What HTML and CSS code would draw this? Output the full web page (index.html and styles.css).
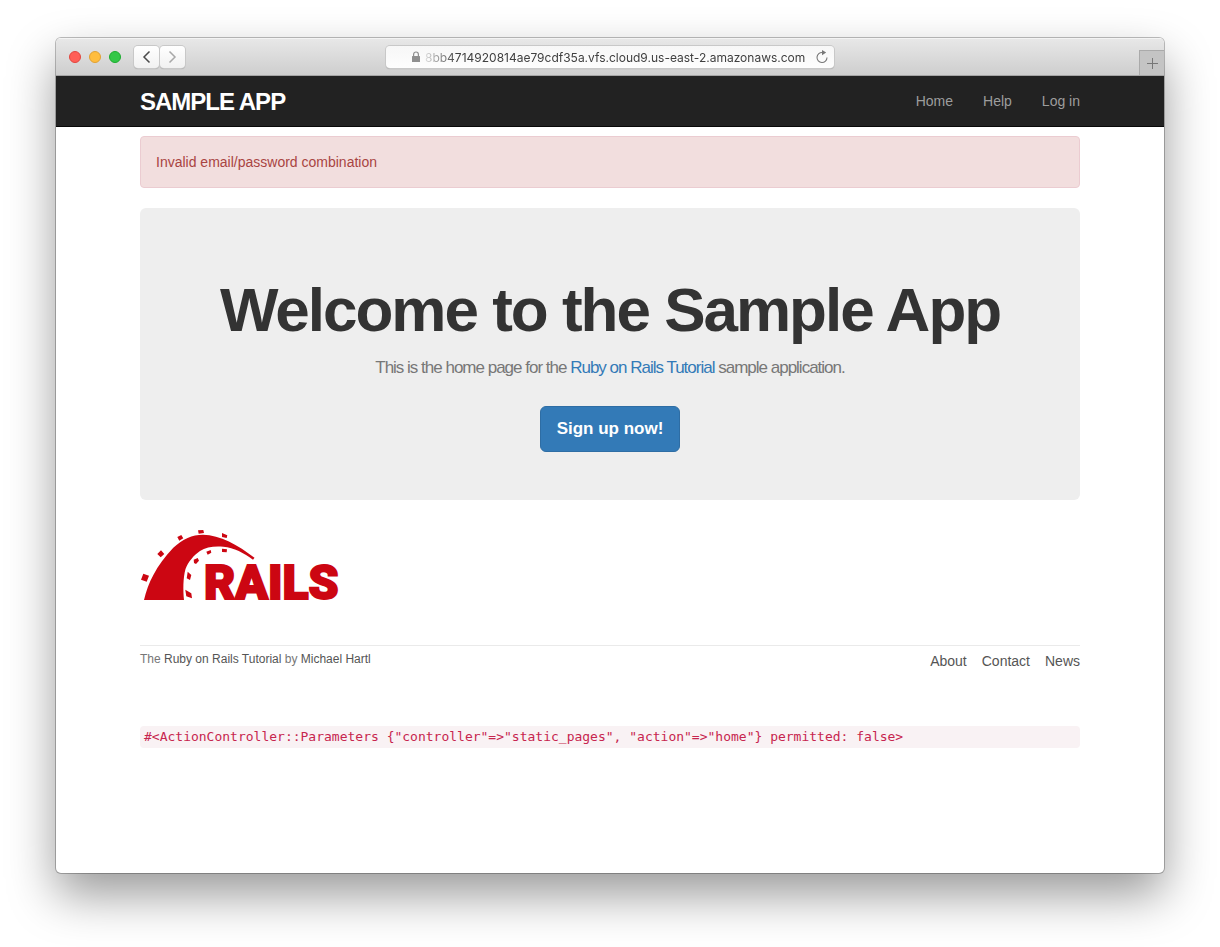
FILE: index.html
```html
<!DOCTYPE html>
<html lang="en">
<head>
<meta charset="utf-8">
<title>Ruby on Rails Tutorial Sample App</title>
<link rel="stylesheet" href="styles.css">
</head>
<body>
<div class="window">
  <div class="toolbar">
    <div class="lights">
      <button class="light light-close" aria-label="Close"></button>
      <button class="light light-minimize" aria-label="Minimize"></button>
      <button class="light light-zoom" aria-label="Zoom"></button>
    </div>
    <div class="history">
      <button class="history-button" aria-label="Back"><svg width="9" height="14" viewBox="0 0 9 14"><path d="M7.500 1.500 2 7l5.500 5.500" fill="none" stroke="#4a4a4a" stroke-width="1.500"/></svg></button>
      <button class="history-button" aria-label="Forward"><svg width="9" height="14" viewBox="0 0 9 14"><path d="M1.500 1.500 7 7l-5.500 5.500" fill="none" stroke="#a8a8a8" stroke-width="1.500"/></svg></button>
    </div>
    <div class="address">
      <svg width="10" height="12" viewBox="0 0 10 12"><path d="M2.600 6V3.600a2.400 2.600 0 0 1 4.800 0V6" fill="none" stroke="#8f8f8f" stroke-width="1.200"/><rect x="1" y="5" width="8" height="6" rx=".6" fill="#8f8f8f"/></svg>
      <input class="url" type="text" aria-label="Address" value="8bb4714920814ae79cdf35a.vfs.cloud9.us-east-2.amazonaws.com">
      <button class="reload" aria-label="Reload"><svg width="14" height="14" viewBox="0 0 14 14"><path d="M7.500 2.500A5 5 0 1 0 12 7.500" fill="none" stroke="#777" stroke-width="1.100"/><path d="M7 0l4.200 2.600L7 5.200z" fill="#777"/></svg></button>
    </div>
    <button class="new-tab" aria-label="New tab"><svg width="11" height="11" viewBox="0 0 11 11"><path d="M5.500 0v11M0 5.500h11" stroke="#777" stroke-width="1"/></svg></button>
  </div>
  <header class="navbar">
    <div class="container navbar-row">
      <a class="logo" href="#">SAMPLE APP</a>
      <nav class="nav-links">
        <a href="#">Home</a>
        <a href="#">Help</a>
        <a href="#">Log in</a>
      </nav>
    </div>
  </header>
  <main class="container">
    <div class="alert" role="alert">Invalid email/password combination</div>
    <section class="jumbotron">
      <h1>Welcome to the Sample App</h1>
      <h2>This is the home page for the <a href="#">Ruby on Rails Tutorial</a> sample application.</h2>
      <button class="signup">Sign up now!</button>
    </section>
    <a class="rails" href="#" aria-label="Rails">
      <svg width="200" height="71" viewBox="0 0 200 71" fill="#cc0612">
        <path d="M4 70C8 53 16 36 33.300 17.700 43 9 52 4.700 63 4.700 80 5 98 15 114.500 27.700L113 29.700C104 23 94 17.500 83.300 16.700 74 16 66 17 60 21 54 25 48 32 45.500 39 43 48 43 60 44 70Z"/>
        <path d="M3.300 43.700 9 45.700 6.700 51.700 1 49.700zM21 20.300 24.300 24 20.700 27.300 17.300 24zM37.300 7 41.300 5 43.300 8.300 39.300 10.700zM58 .3 63.300 0 64 3 58.700 3.700zM82 3 87.300 5.300 86.700 8 82 7zM82 18.700 87 19.300 86.700 22.300 82 22zM66.300 21.700 70.700 20 71.300 22.700 67.700 24.700zM53.700 29.700 57.700 28 59 30.700 56 34 54 33zM47.700 41.700 51.300 45 50 50 46.700 48.300zM45.300 59.700 51.300 63.300 52 68.300 46.300 66.300z"/>
        <text class="rails-word" x="64" y="69">RAILS</text>
      </svg>
    </a>
    <footer class="footer">
      <small>The <a href="#">Ruby on Rails Tutorial</a> by <a href="#">Michael Hartl</a></small>
      <nav class="footer-links">
        <a href="#">About</a>
        <a href="#">Contact</a>
        <a href="#">News</a>
      </nav>
    </footer>
    <code class="debug">#&lt;ActionController::Parameters {"controller"=&gt;"static_pages", "action"=&gt;"home"} permitted: false&gt;</code>
  </main>
</div>
</body>
</html>
```
FILE: styles.css
```css
* {
  box-sizing: border-box;
}

body {
  display: flex;
  min-height: 100vh;
  margin: 0;
  padding: 38px 56px 74px;
  background: #fff;
  color: #333;
  font: 14px/20px "Liberation Sans", Arial, sans-serif;
}

a {
  color: #337ab7;
  text-decoration: none;
}

button {
  padding: 0;
  border: 0;
  background: none;
  font-family: inherit;
}

.window {
  flex: 1;
  min-width: 0;
  overflow: hidden;
  border-radius: 5px;
  background: #fff;
  box-shadow: 0 0 0 1px rgba(0, 0, 0, 0.25), 0 22px 48px rgba(0, 0, 0, 0.4);
}

.toolbar {
  display: grid;
  grid-template-areas: "controls address tab";
  grid-template-columns: 1fr 448px 1fr;
  align-items: center;
  height: 38px;
  border-bottom: 1px solid #a5a5a5;
  background: linear-gradient(#e8e8e8, #cecece);
  box-shadow: inset 0 1px #f4f4f4;
}

.lights,
.history {
  display: flex;
  grid-area: controls;
  justify-self: start;
}

.lights {
  gap: 8px;
  margin-left: 13px;
}

.light {
  width: 12px;
  height: 12px;
  border: 1px solid;
  border-radius: 50%;
}

.light-close {
  border-color: #e2463f;
  background: #ff5f57;
}

.light-minimize {
  border-color: #e1a134;
  background: #ffbd3e;
}

.light-zoom {
  border-color: #1dac2f;
  background: #33c748;
}

.history {
  gap: 1px;
  margin-left: 78px;
}

.history-button {
  display: grid;
  place-items: center;
  width: 25px;
  height: 22px;
  border-radius: 4px;
  background: linear-gradient(#fff, #f1f1f1);
  box-shadow: 0 0 0 1px #c8c8c8, 0 1px 1px #999;
}

.address {
  display: flex;
  grid-area: address;
  align-items: center;
  height: 22px;
  padding: 0 5px 0 25px;
  border-radius: 4px;
  background: linear-gradient(#f7f7f7, #fdfdfd);
  box-shadow: 0 0 0 1px #c8c8c8, 0 1px 1px #999;
}

.url {
  flex: 1;
  min-width: 0;
  margin-left: 4px;
  padding: 2px 0 0;
  border: 0;
  outline: 0;
  background: none;
  color: #404040;
  font: 12px/20px Inter, sans-serif;
  mask-image: linear-gradient(90deg, rgba(0, 0, 0, 0.15), #000 32px);
}

.reload {
  display: flex;
}

.new-tab {
  display: grid;
  grid-area: tab;
  align-self: end;
  justify-self: end;
  place-items: center;
  width: 25px;
  height: 25px;
  border: 1px solid #aaa;
  border-width: 1px 0 0 1px;
  background: #c4c4c4;
}

.navbar {
  border-bottom: 1px solid #080808;
  background: #222;
}

.container {
  max-width: 940px;
  margin: 0 auto;
}

.navbar-row {
  display: flex;
  align-items: center;
  justify-content: space-between;
  height: 50px;
}

.logo {
  padding-top: 2px;
  color: #fff;
  font-size: 24px;
  font-weight: bold;
  letter-spacing: -1px;
}

.nav-links {
  display: flex;
  gap: 30px;
}

.nav-links a {
  color: #9d9d9d;
}

.alert {
  margin: 9px 0 20px;
  padding: 15px;
  border: 1px solid #ebccd1;
  border-radius: 4px;
  background: #f2dede;
  color: #a94442;
}

.jumbotron {
  padding: 48px 60px;
  border-radius: 6px;
  background: #eee;
  text-align: center;
}

.jumbotron h1 {
  margin: 19px 0 11px;
  font-size: 62px;
  font-weight: bold;
  line-height: 70px;
  letter-spacing: -2px;
}

.jumbotron h2 {
  margin: 0 0 26px;
  color: #777;
  font-size: 17px;
  font-weight: normal;
  line-height: 24px;
  letter-spacing: -1px;
}

.signup {
  height: 46px;
  padding: 0 16px;
  border: 1px solid #2e6da4;
  border-radius: 6px;
  background: #337ab7;
  color: #fff;
  font-size: 17px;
  font-weight: bold;
  line-height: 24px;
}

.rails {
  display: block;
  margin-top: 30px;
}

.rails svg {
  display: block;
  overflow: visible;
}

.rails-word {
  font: 900 48px Roboto, sans-serif;
  stroke: #cc0612;
  stroke-width: 2px;
}

.footer {
  display: flex;
  justify-content: space-between;
  margin-top: 44px;
  padding-top: 5px;
  border-top: 1px solid #eaeaea;
  color: #777;
}

.footer a {
  color: #555;
}

.footer small {
  font-size: 12px;
  line-height: 16px;
}

.footer-links {
  display: flex;
  gap: 15px;
}

.debug {
  display: block;
  margin-top: 55px;
  padding: 2px 4px;
  border-radius: 4px;
  background: #f9f2f4;
  color: #c7254e;
  font: 13px/18px "DejaVu Sans Mono", monospace;
}
```
